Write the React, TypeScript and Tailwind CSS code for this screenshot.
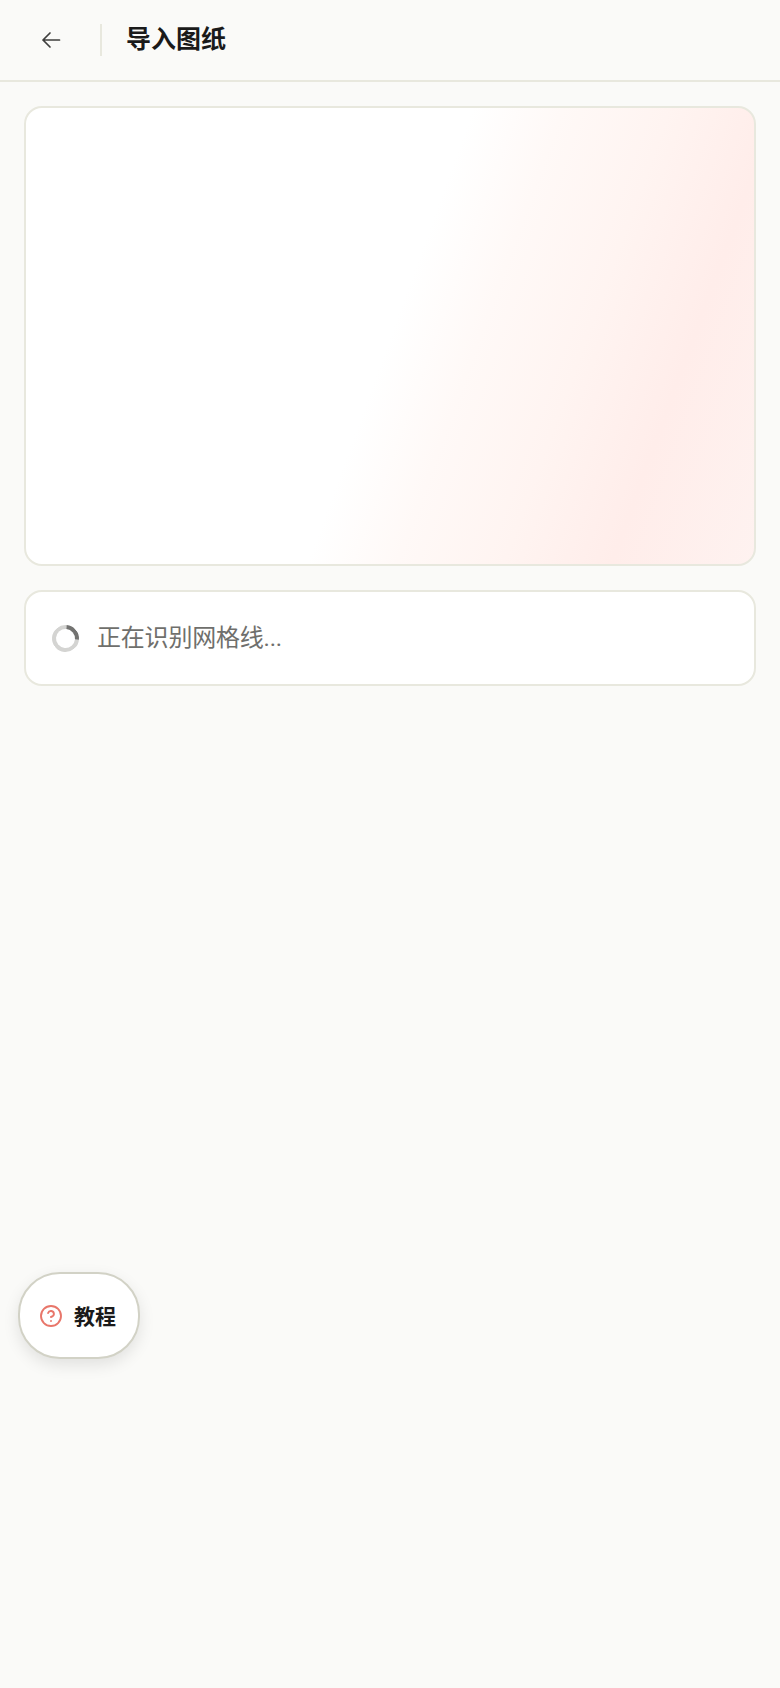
import { CircleHelp } from 'lucide-react';

const font = "font-['Roboto','Noto_Sans_CJK_SC',sans-serif]";

export default function App() {
  return (
    <div className={`relative min-h-[1688px] bg-[#fafaf8] ${font}`}>
      {/* Top bar */}
      <header className="flex h-[82px] items-center border-b-2 border-[#e8e8de] pl-[38px]">
        <button className="flex h-6 w-6 items-center justify-center text-[#3f3f3d]">
          <svg width="24" height="24" viewBox="0 0 24 24" fill="none" stroke="currentColor" strokeWidth="1.7" strokeLinecap="round" strokeLinejoin="round">
            <path d="M5 12H21.5M12 5L5 12L12 19" />
          </svg>
        </button>
        <div className="ml-[38px] h-8 w-0.5 bg-[#e8e8de]" />
        <h1 className="ml-[24px] text-[25px] font-bold leading-8 text-[#1a1a1a]">导入图纸</h1>
      </header>

      <main className="flex flex-col gap-6 px-6 pt-6">
        {/* Preview being scanned */}
        <div className="h-[460px] rounded-[18px] border-2 border-[#e8e8de] bg-[linear-gradient(110deg,#ffffff_50%,#fff9f7_60%,#fff4f1_72%,#ffedea_84%,#fef2f0_100%)]" />

        {/* Status */}
        <div className="flex h-[96px] items-center gap-[18px] rounded-[18px] border-2 border-[#e8e8de] bg-white pl-[26px]">
          <div className="h-[27px] w-[27px] rounded-full border-4 border-[#d4d4d2] border-r-[#737371] [transform:rotate(-40deg)]" />
          <span className="text-2xl leading-8 tracking-[-0.2px] text-[#6f6f6c]">正在识别网格线...</span>
        </div>
      </main>

      {/* Floating tutorial button */}
      <button className="absolute left-[18px] top-[1272px] flex h-[87px] w-[122px] items-center gap-[11px] rounded-[42px] border-2 border-[#d2d2c6] bg-white pl-[19px] shadow-[0_6px_16px_rgba(0,0,0,0.10)]">
        <CircleHelp size={24} strokeWidth={1.9} className="text-[#e8766a]" />
        <span className="relative top-px text-[21px] font-bold leading-7 text-[#1a1a1a]">教程</span>
      </button>
    </div>
  );
}
